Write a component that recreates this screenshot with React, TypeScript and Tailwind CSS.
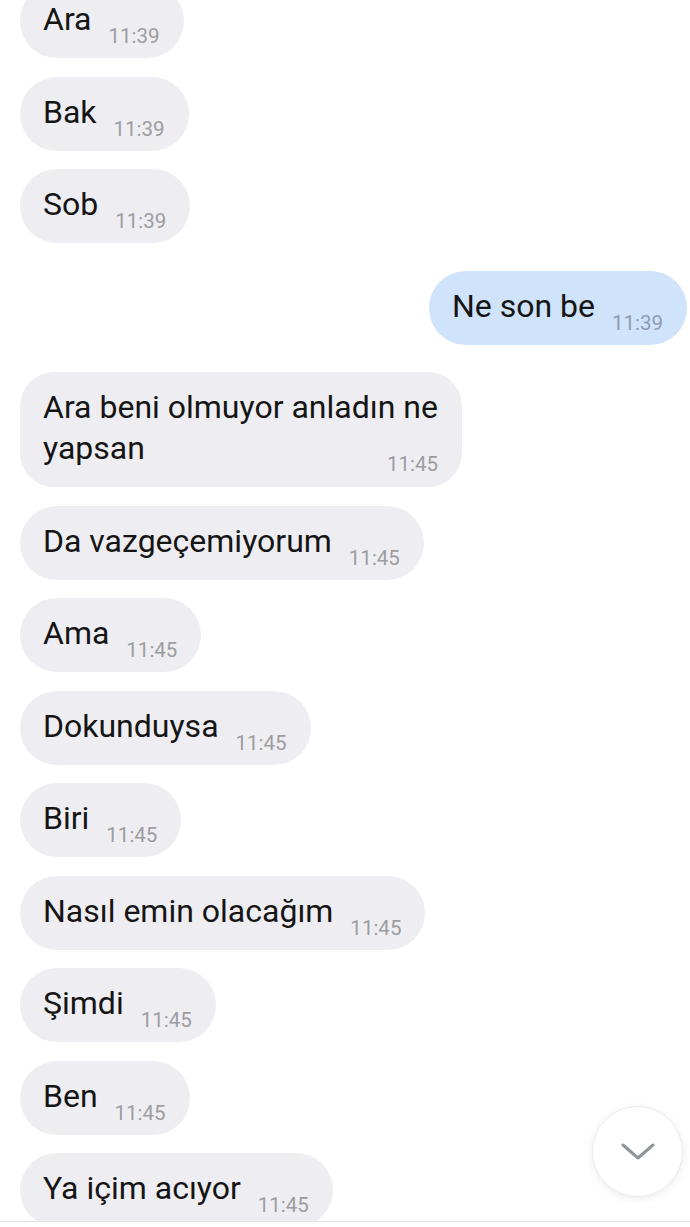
import React from 'react';

type Msg = { lines: string[]; time: string; out?: boolean; groupStart?: boolean };

const messages: Msg[] = [
  { lines: ['Ara'], time: '11:39' },
  { lines: ['Bak'], time: '11:39' },
  { lines: ['Sob'], time: '11:39' },
  { lines: ['Ne son be'], time: '11:39', out: true, groupStart: true },
  { lines: ['Ara beni olmuyor anladın ne', 'yapsan'], time: '11:45', groupStart: true },
  { lines: ['Da vazgeçemiyorum'], time: '11:45' },
  { lines: ['Ama'], time: '11:45' },
  { lines: ['Dokunduysa'], time: '11:45' },
  { lines: ['Biri'], time: '11:45' },
  { lines: ['Nasıl emin olacağım'], time: '11:45' },
  { lines: ['Şimdi'], time: '11:45' },
  { lines: ['Ben'], time: '11:45' },
  { lines: ['Ya içim acıyor'], time: '11:45' },
];

const Bubble: React.FC<{ m: Msg; first: boolean }> = ({ m, first }) => {
  const bg = m.out ? 'bg-[#cfe3fa]' : 'bg-[#eeeef2]';
  const timeColor = m.out ? 'text-[#8d9cb0]' : 'text-[#9c9ca1]';
  const spacing = first ? 'mt-[-16px]' : m.groupStart ? 'mt-[9px]' : '';

  if (m.lines.length > 1) {
    // wrapped message: time sits beside the last line, pushed to the right edge
    const last = m.lines[m.lines.length - 1];
    return (
      <div className={`flex ${spacing}`}>
        <div className={`${bg} w-[442px] rounded-[34px] pl-[23px] pr-[24px] pt-[15px] pb-[13px] flex flex-col`}>
          {m.lines.slice(0, -1).map((l, i) => (
            <p key={i} className="text-[32px] leading-[41px] text-[#151515] whitespace-nowrap">{l}</p>
          ))}
          <div className="flex items-start justify-between">
            <span className="text-[32px] leading-[41px] text-[#151515]">{last}</span>
            <span className={`mt-[26px] text-[20.5px] leading-[20px] ${timeColor}`}>{m.time}</span>
          </div>
        </div>
      </div>
    );
  }

  return (
    <div className={`flex ${m.out ? 'justify-end pr-[3px]' : ''} ${spacing}`}>
      <div className={`${bg} h-[74px] rounded-full pl-[23px] pr-[24px] pt-[15px] flex items-start`}>
        <span className="text-[32px] leading-[41px] text-[#151515] whitespace-nowrap">{m.lines[0]}</span>
        <span className={`ml-[17px] mt-[27px] text-[20.5px] leading-[20px] ${timeColor}`}>{m.time}</span>
      </div>
    </div>
  );
};

const App: React.FC = () => {
  return (
    <div
      className="relative w-[690px] h-[1227px] bg-white overflow-hidden"
      style={{ fontFamily: 'Roboto, "Noto Sans", sans-serif' }}
    >
      <div className="h-[1222px] overflow-hidden border-b border-[#e3e3e5]">
        <div className="flex flex-col gap-[18.5px] pl-[20px]">
          {messages.map((m, i) => (
            <Bubble key={i} m={m} first={i === 0} />
          ))}
        </div>
      </div>

      {/* scroll-to-bottom button */}
      <button className="absolute left-[592px] top-[1106px] w-[91px] h-[91px] rounded-full bg-white border border-[#ececee] shadow-[0_2px_8px_rgba(0,0,0,0.08)] flex items-center justify-center">
        <svg width="34" height="18" viewBox="0 0 34 18" fill="none">
          <path d="M2 2 L17 15 L32 2" stroke="#8f939a" strokeWidth="3" strokeLinecap="round" strokeLinejoin="round" />
        </svg>
      </button>
    </div>
  );
};

export default App;
